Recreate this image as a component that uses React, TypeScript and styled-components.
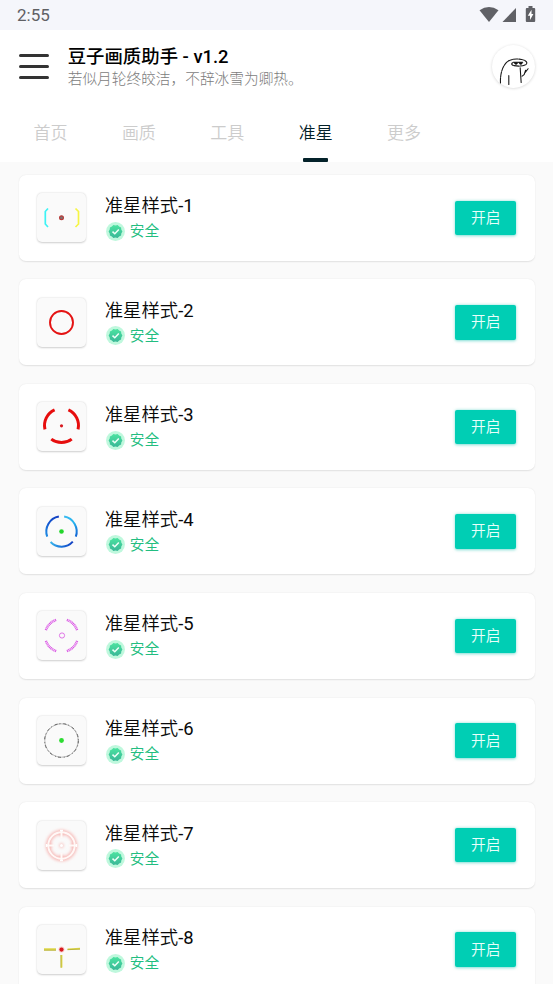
import React from 'react';
import styled, { createGlobalStyle } from 'styled-components';

const GlobalStyle = createGlobalStyle`
  * { box-sizing: border-box; }
  body {
    margin: 0;
    background: #fafafa;
    font-family: Roboto, "Noto Sans CJK SC", sans-serif;
  }
`;

const Screen = styled.div`
  width: 553px;
  height: 984px;
  overflow: hidden;
  background: #fafafa;
`;

const StatusBar = styled.div`
  display: flex;
  align-items: center;
  justify-content: space-between;
  height: 30px;
  padding: 0 16px 0 17px;
  background: #f5f6fb;
  color: #5f6064;
  font-size: 17px;
  line-height: 26px;
`;

const StatusIcons = styled.svg`
  display: block;
  width: 58px;
  height: 18px;
  margin-top: -2px;
`;

const Header = styled.header`
  display: flex;
  align-items: center;
  height: 73px;
  padding: 0 18px 0 19px;
  background: #fff;
`;

const MenuButton = styled.button`
  display: flex;
  flex-direction: column;
  justify-content: space-between;
  width: 30px;
  height: 25px;
  padding: 0;
  border: 0;
  background: none;
`;

const MenuLine = styled.span`
  height: 2.6px;
  border-radius: 2px;
  background: #333;
`;

const Heading = styled.div`
  flex: 1;
  margin-left: 18.7px;
  padding-top: 2px;
`;

const AppTitle = styled.h1`
  margin: 0;
  color: #000;
  font-size: 18.4px;
  font-weight: 500;
  line-height: 23px;
  white-space: nowrap;
`;

const Subtitle = styled.p`
  margin: 0;
  color: #7c7c7c;
  font-size: 14.7px;
  font-weight: 300;
  line-height: 23px;
  white-space: nowrap;
`;

const Avatar = styled.div`
  width: 43.5px;
  height: 43.5px;
  border-radius: 50%;
  background: #fff;
  box-shadow: 0 0.5px 3px rgba(0, 0, 0, 0.17);
`;

const Tabs = styled.nav`
  display: flex;
  height: 59px;
  padding-left: 6.3px;
  background: #fff;
`;

const Tab = styled.a<{ $active: boolean }>`
  display: flex;
  flex-direction: column;
  align-items: center;
  justify-content: space-between;
  width: 88.4px;
  padding-top: 17px;
  color: ${p => (p.$active ? '#04222a' : '#ccc')};
  font-size: 17px;
  font-weight: 350;
  line-height: 26px;
  &::after {
    content: '';
    width: 25px;
    height: 4px;
    border-radius: 1px;
    background: ${p => (p.$active ? '#04222a' : 'transparent')};
  }
`;

const List = styled.main`
  display: flex;
  flex-direction: column;
  gap: 18.55px;
  padding: 12.8px 18.5px 0 18.5px;
`;

const Card = styled.article`
  display: flex;
  align-items: center;
  flex-shrink: 0;
  height: 86px;
  padding: 0 18.2px;
  border-radius: 7px;
  background: #fff;
  box-shadow: 0 0.5px 1.5px rgba(0, 0, 0, 0.1);
`;

const Thumb = styled.div`
  width: 49px;
  height: 49px;
  border-radius: 5px;
  background: #fafafa;
  box-shadow: 0 0.5px 2px rgba(0, 0, 0, 0.2);
`;

const Art = styled.svg`
  display: block;
  width: 100%;
  height: 100%;
`;

const Info = styled.div`
  flex: 1;
  margin-left: 19px;
`;

const Name = styled.div`
  color: #0a0a0a;
  font-size: 18.4px;
  font-weight: 350;
  line-height: 27px;
`;

const NameIndex = styled.span`
  font-weight: 400;
`;

const Safe = styled.div`
  display: flex;
  align-items: center;
  gap: 5px;
  padding-left: 1px;
  color: #22bd80;
  font-size: 14.7px;
  font-weight: 350;
  line-height: 24px;
`;

const SafeLabel = styled.span`
  padding-top: 1px;
  line-height: 23px;
`;

const Badge = styled.svg`
  width: 19px;
  height: 19px;
`;

const EnableButton = styled.button`
  width: 61.3px;
  height: 34.4px;
  padding: 1px 0 0;
  border: 0;
  border-radius: 2px;
  background: #00ceb4;
  box-shadow: 0 0.5px 3px rgba(0, 190, 170, 0.5);
  color: #e9fffb;
  font-family: inherit;
  font-size: 14.7px;
  font-weight: 350;
  line-height: 33px;
`;

/* Arc around (24.5, y) between two angles, measured clockwise from 3 o'clock. */
const arc = (r: number, from: number, to: number, y = 24.5) => {
  const pt = (a: number) => {
    const t = (a * Math.PI) / 180;
    return `${(24.5 + r * Math.cos(t)).toFixed(2)} ${(y + r * Math.sin(t)).toFixed(2)}`;
  };
  return `M${pt(from)}A${r} ${r} 0 0 1 ${pt(to)}`;
};

const reticles: React.ReactNode[] = [
  <g fill="none">
    <path d="M11 15.5L8.3 18.5V31L11 34" stroke="#3df3f5" strokeWidth="1.7" />
    <path d="M38.5 15.5L41.5 18.5V31L38.5 34" stroke="#f6f545" strokeWidth="1.7" />
    <circle cx="24.5" cy="24.7" r="1.9" fill="#777" stroke="#b83a38" strokeWidth="1.2" />
  </g>,
  <circle cx="24.5" cy="24.5" r="11.5" fill="none" stroke="#e41313" strokeWidth="1.9" />,
  <g fill="none" stroke="#e60d0d" strokeWidth="3">
    <path d={arc(17, -66, 13, 23.5)} />
    <path d={arc(17, 53, 127, 23.5)} />
    <path d={arc(17, 167, 246, 23.5)} />
    <circle cx="24.5" cy="23.8" r="1.6" fill="#d71920" stroke="none" />
  </g>,
  <g fill="none" strokeWidth="2">
    <path d={arc(15.2, -80, 20)} stroke="url(#skyArc)" />
    <path d={arc(15.2, 42, 136)} stroke="url(#baseArc)" />
    <path d={arc(15.2, 160, 260)} stroke="url(#blueArc)" />
    <circle cx="24.5" cy="24.5" r="2.3" fill="#23d62b" />
  </g>,
  <g fill="none">
    {[45, 135, 225, 315].map(a => (
      <g key={a}>
        <path d={arc(16.5, a - 26, a + 26)} stroke="#d54be0" strokeWidth="2.4" strokeDasharray="1.2 .5" />
        <path d={arc(16.5, a - 24, a + 24)} stroke="#f8c8fb" strokeWidth=".7" />
      </g>
    ))}
    <circle cx="25" cy="24.5" r="2.6" stroke="#dd68e4" strokeWidth=".9" />
  </g>,
  <g fill="none">
    <circle cx="24.5" cy="24.5" r="16.7" stroke="#b5b5b5" strokeWidth="1" />
    <circle cx="24.5" cy="24.5" r="16.9" stroke="#666" strokeWidth="1" strokeDasharray="3 2 1 3" />
    <circle cx="24.5" cy="24.5" r="2.4" fill="#2ddc32" />
  </g>,
  <g fill="none">
    <g filter="url(#glow)" stroke="#f5a5a2" strokeOpacity=".75" strokeWidth="4.5">
      <circle cx="24.5" cy="24.5" r="13.2" />
      <path d="M24.5 9v6M24.5 34v6M9 24.5h6M34 24.5h6" strokeWidth="4" />
      <circle cx="24.5" cy="24.5" r="1.2" strokeWidth="2" />
    </g>
    <circle cx="24.5" cy="24.5" r="13.2" stroke="#fff8f6" strokeWidth="2" />
    <path d="M24.5 9v8M24.5 32v8M9 24.5h8M32 24.5h8" stroke="#fffaf8" strokeWidth="2" />
    <path d="M23 9.5h3M23 39.5h3M9.5 23v3M39.5 23v3" stroke="#fff" strokeWidth="1.4" />
    <circle cx="24.5" cy="24.5" r="1.5" fill="#fff" />
  </g>,
  <g>
    <path d="M7 23.2H19V25.5H7ZM30.5 23.5L43 22.8V24.4L30.5 25ZM23.7 30H25.4V42.5L23.9 43Z" fill="#ded84b" />
    <path d="M7 25.2H19M30.5 24.7L43 24.1M23.9 30V42.7" stroke="#aaa32d" strokeWidth=".7" />
    <circle cx="24.5" cy="24.6" r="3" fill="#f9cdca" />
    <circle cx="24.5" cy="24.6" r="2.1" fill="#d81920" />
  </g>,
];

const gearPoints = Array.from({ length: 20 }, (_, i) => {
  const r = i % 2 ? 6.1 : 6.9;
  const t = (i * Math.PI) / 10;
  return `${(9.5 + r * Math.cos(t)).toFixed(2)},${(9.5 + r * Math.sin(t)).toFixed(2)}`;
}).join(' ');

const SharedPaint = () => (
  <defs>
    <linearGradient id="skyArc" x1="0" y1="0" x2="1" y2="1">
      <stop offset="0" stopColor="#39baf0" />
      <stop offset=".55" stopColor="#25b3ee" />
      <stop offset="1" stopColor="#1261d3" />
    </linearGradient>
    <linearGradient id="baseArc">
      <stop offset="0" stopColor="#39b5ec" />
      <stop offset=".5" stopColor="#1b72da" />
      <stop offset="1" stopColor="#1340c2" />
    </linearGradient>
    <linearGradient id="blueArc" x1="1" y1="0" x2="0" y2="1">
      <stop offset="0" stopColor="#123cc0" />
      <stop offset=".6" stopColor="#1459d1" />
      <stop offset="1" stopColor="#218fe4" />
    </linearGradient>
    <linearGradient id="seal" x1="0" y1="0" x2="0" y2="1">
      <stop offset="0" stopColor="#4be3a0" />
      <stop offset="1" stopColor="#3ab797" />
    </linearGradient>
    <filter id="glow" x="-30%" y="-30%" width="160%" height="160%">
      <feGaussianBlur stdDeviation="1.5" />
    </filter>
  </defs>
);

const tabs = ['首页', '画质', '工具', '准星', '更多'];

export default function App() {
  return (
    <Screen>
      <GlobalStyle />
      <StatusBar>
        <span>2:55</span>
        <StatusIcons viewBox="0 0 58 18" fill="#606166">
          <path d="M.5 5.2Q10 -1.2 19.5 5.2L10 17Z" />
          <path d="M37 3V17H23.5Z" />
          <path d="M49.5 3V1h4v2h1.7q1 0 1 1V16q0 1-1 1h-7.4q-1 0-1-1V4q0-1 1-1Z" />
          <path d="M52.5 4.8L48.8 10.8H51V15L54.4 9H52.5Z" fill="#fff" />
        </StatusIcons>
      </StatusBar>
      <Header>
        <MenuButton aria-label="菜单">
          <MenuLine />
          <MenuLine />
          <MenuLine />
        </MenuButton>
        <Heading>
          <AppTitle>豆子画质助手 - v1.2</AppTitle>
          <Subtitle>若似月轮终皎洁，不辞冰雪为卿热。</Subtitle>
        </Heading>
        <Avatar>
          <Art viewBox="0 0 44 44" fill="none" stroke="#161616" strokeWidth="1.1" strokeLinecap="round" strokeLinejoin="round">
            <path d="M8.6 38.5C8.2 32 9.5 25 12.5 20.5C16 14.5 22 13.4 30 14.6C35.5 15.8 36.3 18.5 34 20C31 21.6 25 21.8 21 20.5Q19 19.4 20.8 18" strokeDasharray="5 1" />
            <path d="M17 31V40M28.5 23L29.5 38M30.5 31.5L32.5 30L34 25.5M33 28.5L36.5 24" />
            <path d="M21.5 17.4H31" />
            <path d="M22.5 17.7h3.4q0 2-1.6 2t-1.8-2ZM27.3 17.7H30.7q0 2-1.6 2t-1.8-2Z" fill="#111" strokeWidth=".6" />
          </Art>
        </Avatar>
      </Header>
      <Tabs>
        {tabs.map(label => (
          <Tab key={label} $active={label === '准星'}>{label}</Tab>
        ))}
      </Tabs>
      <List>
        {reticles.map((reticle, i) => (
          <Card key={i}>
            <Thumb>
              <Art viewBox="0 0 49 49">
                {i === 0 && <SharedPaint />}
                {reticle}
              </Art>
            </Thumb>
            <Info>
              <Name>准星样式<NameIndex>-{i + 1}</NameIndex></Name>
              <Safe>
                <Badge viewBox="0 0 19 19">
                  <circle cx="9.5" cy="9.5" r="9.4" fill="#bff8dd" />
                  <polygon points={gearPoints} fill="url(#seal)" />
                  <path d="M6.5 9.6L8.8 11.8L12.8 7.6" fill="none" stroke="#effff8" strokeWidth="1.5" />
                </Badge>
                <SafeLabel>安全</SafeLabel>
              </Safe>
            </Info>
            <EnableButton>开启</EnableButton>
          </Card>
        ))}
      </List>
    </Screen>
  );
}
